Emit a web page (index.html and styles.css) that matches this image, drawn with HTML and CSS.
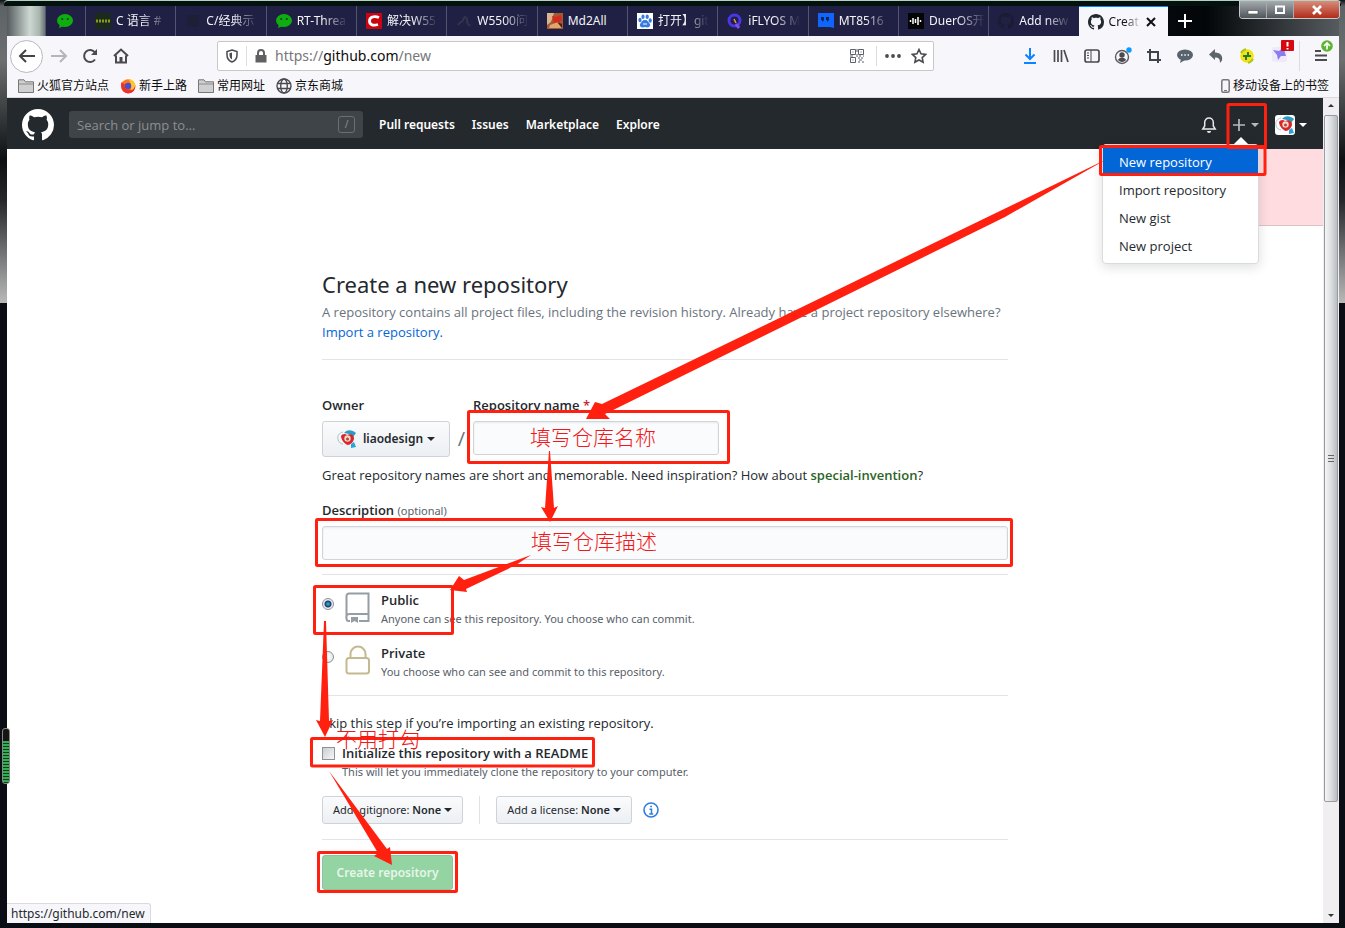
FILE: index.html
```html
<!DOCTYPE html>
<html lang="en">
<head>
<meta charset="utf-8">
<title>Create a New Repository</title>
<link rel="stylesheet" href="styles.css">
</head>
<body>
<svg class="defs" aria-hidden="true">
  <symbol id="octocat" viewBox="0 0 16 16"><path d="M8 0C3.58 0 0 3.58 0 8c0 3.54 2.29 6.53 5.47 7.59.4.07.55-.17.55-.38 0-.19-.01-.82-.01-1.49-2.01.37-2.53-.49-2.69-.94-.09-.23-.48-.94-.82-1.13-.28-.15-.68-.52-.01-.53.63-.01 1.08.58 1.23.82.72 1.21 1.87.87 2.33.66.07-.52.28-.87.51-1.07-1.78-.2-3.64-.89-3.64-3.95 0-.87.31-1.59.82-2.15-.08-.2-.36-1.02.08-2.12 0 0 .67-.21 2.2.82.64-.18 1.32-.27 2-.27.68 0 1.36.09 2 .27 1.53-1.04 2.2-.82 2.2-.82.44 1.1.16 1.92.08 2.12.51.56.82 1.27.82 2.15 0 3.07-1.87 3.75-3.65 3.95.29.25.54.73.54 1.48 0 1.07-.01 1.93-.01 2.2 0 .21.15.46.55.38A8.013 8.013 0 0016 8c0-4.42-3.58-8-8-8z"/></symbol>
  <symbol id="wechat" viewBox="0 0 16 16"><ellipse cx="8" cy="7.500" rx="8" ry="6.500" fill="#0fae10"/><path d="M3 11l-1 4 5-2z" fill="#0fae10"/><circle cx="5.200" cy="6" r="1.100" fill="#15402a"/><circle cx="10.800" cy="6" r="1.100" fill="#15402a"/></symbol>
  <symbol id="folder" viewBox="0 0 16 14"><path d="M.5 13.500V.8h5.500l1.500 2h8v10.700z" fill="#cfcfcf" stroke="#777"/><path d="M1 5h14" stroke="#8b8b8b"/></symbol>
  <symbol id="avatar" viewBox="0 0 20 20"><path d="M6 3C2 4 0 7 1 10c0 3 3 5 5 5" fill="none" stroke="#a9c3cc"/><path d="M7 4c4-4 8-3 12 0l-3 4-4-3z" fill="#2b9cc4"/><path d="M4 7c1-2 4-3 6-1 3-2 7 0 7 3 0 4-4 7-6 7-4-1-7-6-7-9z" fill="#d8262c"/><circle cx="10.500" cy="9.500" r="3.200" fill="#f4d9c6"/><circle cx="10.500" cy="10" r="1.500" fill="#b5453c"/><path d="M14 15l3-2 2 5-5 1z" fill="#27a5d8"/></symbol>
</svg>

<div class="window">
  <div class="tabbar">
    <div class="glass"></div>
    <div class="tabs">
      <div class="tab tab-pin"><svg width="16" height="16"><use href="#wechat"/></svg></div>
      <div class="tab"><svg width="16" height="16" viewBox="0 0 16 16"><path d="M0 0h16v16H0z" fill="#1a2b1c"/><path d="M1 8h14" stroke="#8a9a1c" stroke-width="3" stroke-dasharray="2 1"/></svg><span>C 语言 #</span></div>
      <div class="tab"><svg width="16" height="16" viewBox="0 0 16 16"><path d="M2 2h12v12H2z" fill="#1c1f36"/></svg><span>C/经典示</span></div>
      <div class="tab"><svg width="16" height="16"><use href="#wechat"/></svg><span>RT-Threa</span></div>
      <div class="tab"><svg width="16" height="16" viewBox="0 0 16 16"><path d="M0 0h16v16H0z" fill="#c9060f"/><path d="M13 4.500C8 2.500 3.500 4 3.500 8s4 5 8.500 3.500" fill="none" stroke="#fff" stroke-width="2.800"/></svg><span>解决W55</span></div>
      <div class="tab"><svg width="16" height="16" viewBox="0 0 16 16"><path d="M2 12c2-4 5-2 6-7 1-3 4 1 3 4 1 3 3 3 3 4" fill="none" stroke="#33354f" stroke-width="2"/></svg><span>W5500问</span></div>
      <div class="tab"><svg width="16" height="16" viewBox="0 0 16 16"><path d="M0 0h16v16H0z" fill="#a05a34"/><path d="M0 0h7l-3 9-4 3z" fill="#d9b48d"/><path d="M5 3l4 1 5-2 1 5-7 5z" fill="#d52a1d"/><path d="M3 12l8-3 4 6H2z" fill="#e2a56b"/><path d="M10 9l5 2v4z" fill="#4b2115"/></svg><span class="plain">Md2All</span></div>
      <div class="tab"><svg width="16" height="16" viewBox="0 0 16 16"><path d="M0 0h16v16H0z" fill="#fff"/><g fill="#3a7be0"><ellipse cx="3" cy="7" rx="1.600" ry="2.200"/><ellipse cx="6" cy="3.700" rx="1.600" ry="2.200"/><ellipse cx="10.200" cy="3.700" rx="1.600" ry="2.200"/><ellipse cx="13.200" cy="7.500" rx="1.600" ry="2.200"/><path d="M8 7c3 0 3 2 5 4 1 3-2 4-5 3-3 1-6 0-5-3 2-2 2-4 5-4z"/></g><path d="M6 11h4" stroke="#fff"/></svg><span>打开】git</span></div>
      <div class="tab"><svg width="16" height="16" viewBox="0 0 16 16"><circle cx="7.500" cy="7.500" r="5.500" fill="none" stroke="#4a35e8" stroke-width="3"/><path d="M7 6l2 4" stroke="#e49a58" stroke-width="1.500"/><path d="M9 11l3 4" stroke="#7a50f0" stroke-width="3"/></svg><span>iFLYOS M</span></div>
      <div class="tab"><svg width="16" height="16" viewBox="0 0 16 16"><path d="M0 0h16v15l-4-1H0z" fill="#0e66ff"/><path d="M3 4h3v3L4 9V7H3zm5 0h3v3L9 9V7H8z" fill="#12254c"/></svg><span>MT8516</span></div>
      <div class="tab"><svg width="16" height="16" viewBox="0 0 16 16"><path d="M0 0h16v16H0z" fill="#050505"/><path d="M2.500 7v2M5 5v6M7.500 6v4M10 4v8M12.500 7v2" stroke="#fff" stroke-width="1.500"/></svg><span>DuerOS开</span></div>
      <div class="tab"><svg width="16" height="16" fill="#1b1c34"><use href="#octocat"/></svg><span>Add new</span></div>
      <div class="tab tab-active"><svg width="16" height="16" fill="#24292e"><use href="#octocat"/></svg><span>Creat</span><button class="tab-close" aria-label="Close tab"><svg width="10" height="10" viewBox="0 0 10 10"><path d="M1 1l8 8M9 1L1 9" stroke="#111" stroke-width="2"/></svg></button></div>
    </div>
    <button class="new-tab" aria-label="New tab"><svg width="14" height="14" viewBox="0 0 14 14"><path d="M7 0v14M0 7h14" stroke="#fff" stroke-width="2"/></svg></button>
    <div class="caption">
      <button aria-label="Minimize"><svg width="12" height="10" viewBox="0 0 12 10"><path d="M1 5.500h10v3.500H1z" fill="#fff" stroke="#444" stroke-width=".6"/></svg></button>
      <button aria-label="Maximize"><svg width="12" height="10" viewBox="0 0 12 10"><path d="M2 1.500h8v6.500H2z" fill="none" stroke="#fff" stroke-width="2"/></svg></button>
      <button class="caption-close" aria-label="Close"><svg width="12" height="10" viewBox="0 0 12 10"><path d="M2 1l8 8M10 1L2 9" stroke="#fff" stroke-width="2.600"/></svg></button>
    </div>
  </div>

  <div class="navbar">
    <button class="back" aria-label="Back"><svg width="18" height="16" viewBox="0 0 18 16"><path d="M17 8H2M8 2L2 8l6 6" fill="none" stroke="#444" stroke-width="2"/></svg></button>
    <button class="icon" aria-label="Forward"><svg width="18" height="16" viewBox="0 0 18 16"><path d="M1 8h14M10 2l6 6-6 6" fill="none" stroke="#b5b5ba" stroke-width="2"/></svg></button>
    <button class="icon" aria-label="Reload"><svg width="16" height="16" viewBox="0 0 16 16"><path d="M13 11.500A6 6 0 1 1 13 4.500" fill="none" stroke="#4a4a4f" stroke-width="2"/><path d="M15 1v6H9z" fill="#4a4a4f"/></svg></button>
    <button class="icon" aria-label="Home"><svg width="16" height="16" viewBox="0 0 16 16"><path d="M1 8l7-6.500L15 8M3 7.500V14.500h10V7.500" fill="none" stroke="#4a4a4f" stroke-width="2"/><path d="M6.500 9h3v5h-3z" fill="#4a4a4f"/></svg></button>
    <div class="urlbar">
      <svg width="14" height="14" viewBox="0 0 14 14"><path d="M7 1l5 1.500V6c0 4-2.500 6-5 7-2.500-1-5-3-5-7V2.500z" fill="none" stroke="#4a4a4f" stroke-width="1.500"/><path d="M7 3.500v7C5 9 4.500 8 4.500 6V4.200z" fill="#4a4a4f"/></svg>
      <i class="sep"></i>
      <svg width="14" height="14" viewBox="0 0 14 14"><path d="M4 7V4a3 3 0 0 1 6 0v3" fill="none" stroke="#606064" stroke-width="2"/><path d="M1.500 6h11v7.500h-11z" fill="#606064"/></svg>
      <span class="url">https://<b>github.com</b>/new</span>
      <svg width="14" height="14" viewBox="0 0 14 14"><path d="M.5.500h5v5h-5zM8.500.500h5v5h-5zM.5 8.500h5v5h-5zM2.500 3h1M10.500 3h1M2.500 11h1M7 0v3M7 5v3M0 7h3M9 7h2M13 7h1M8 9h2M11 9h2M9 11h3M8 13h2M12 13h2" fill="none" stroke="#5b6169"/></svg>
      <i class="sep"></i>
      <svg width="18" height="14" viewBox="0 0 18 14" fill="#4a4a4f"><circle cx="3" cy="7" r="1.900"/><circle cx="9" cy="7" r="1.900"/><circle cx="15" cy="7" r="1.900"/></svg>
      <svg width="16" height="16" viewBox="0 0 16 16"><path d="M8 1.500l2 4.300 4.700.6-3.500 3.200.9 4.700L8 12l-4.100 2.300.9-4.700L1.300 6.400 6 5.800z" fill="none" stroke="#4a4a4f" stroke-width="1.600"/></svg>
    </div>
    <div class="tools">
      <button aria-label="Downloads"><svg width="16" height="16" viewBox="0 0 16 16"><path d="M8 0v11M3.500 6.500L8 11l4.500-4.500M2 15h12" fill="none" stroke="#0a84ff" stroke-width="2"/></svg></button>
      <button aria-label="Library"><svg width="16" height="16" viewBox="0 0 16 16"><path d="M1.500 2v12M5 2v12M8.500 2v12M11 2l4 12" stroke="#4a4a4f" stroke-width="1.700"/></svg></button>
      <button aria-label="Sidebars"><svg width="16" height="16" viewBox="0 0 16 16"><rect x="1" y="2" width="14" height="12" rx="2" fill="none" stroke="#4a4a4f" stroke-width="1.700"/><path d="M7 2v12M3 5h2M3 7.500h2M3 10h2" stroke="#4a4a4f"/></svg></button>
      <button aria-label="Account"><svg width="18" height="20" viewBox="0 0 18 20"><circle cx="8" cy="11" r="6.500" fill="none" stroke="#5c5c61" stroke-width="1.400"/><circle cx="8" cy="9" r="2.700" fill="#4a4a4f"/><path d="M4 14c1-3 7-3 8 0-2 2.500-6 2.500-8 0z" fill="#4a4a4f"/><circle cx="15" cy="4" r="2.700" fill="#0a9cff"/></svg></button>
      <button aria-label="Screenshot"><svg width="16" height="16" viewBox="0 0 16 16"><path d="M4 1v11h11M1 4h11v11" fill="none" stroke="#3f444b" stroke-width="2"/></svg></button>
      <button aria-label="Messages"><svg width="16" height="16" viewBox="0 0 16 16"><ellipse cx="8" cy="7" rx="8" ry="5.500" fill="#58636c"/><path d="M4 11l-1 4 5-3z" fill="#58636c"/><path d="M4 7h1.500M7.300 7h1.500M10.600 7H12" stroke="#fff" stroke-width="1.400"/></svg></button>
      <button aria-label="Undo"><svg width="16" height="16" viewBox="0 0 16 16"><path d="M1 6.500L7 1v3.500c6 0 8 4 7 8l-2 2.500c0-4-1-5.500-5-5.500V12z" fill="#5d646b"/></svg></button>
      <button aria-label="Extension"><svg width="16" height="16" viewBox="0 0 16 16"><circle cx="8" cy="8" r="6.800" fill="#f4e30e"/><path d="M2 5a6.800 6.800 0 0 1 5-3.700M14 11a6.800 6.800 0 0 1-5 3.700" stroke="#a6c71d" stroke-width="2" fill="none"/><path d="M9 4v4h3M4 8h3v4" stroke="#257b3a" stroke-width="2" fill="none"/><path d="M5 8h6" stroke="#257b3a" stroke-width="2"/></svg></button>
      <button class="bird" aria-label="Translate"><svg width="24" height="24" viewBox="0 0 24 24"><rect x="2" y="7" width="15" height="15" rx="2" fill="#eeeafb"/><path d="M3 10l6 1 5-4 1 6 1 3-5 0-3 4-1-5z" fill="#8b7df0"/><rect x="11" y="0" width="13" height="11" rx="1" fill="#d70910"/><path d="M17.500 2v4.500M17.500 8v1.500" stroke="#fff" stroke-width="2"/></svg></button>
    </div>
    <i class="sep tall"></i>
    <button class="menu" aria-label="Open menu"><svg width="20" height="24" viewBox="0 0 20 24"><path d="M2 11h6M2 15.500h12M2 20h12" stroke="#4a4a4f" stroke-width="2"/><circle cx="14" cy="6" r="5.800" fill="#5cb531"/><path d="M14 9.500V3.500M11 6l3-3 3 3" fill="none" stroke="#fff" stroke-width="1.700"/></svg></button>
  </div>

  <div class="bookmarks">
    <a href="#"><svg width="16" height="14"><use href="#folder"/></svg>火狐官方站点</a>
    <a href="#"><svg width="16" height="16" viewBox="0 0 16 16"><circle cx="8" cy="8.300" r="7" fill="#ff7a16"/><path d="M1.500 4C0 10 3 15 8 15.500c5 0 8-4 7.300-9-1 3-3 5-6 5-4 0-5-2-4.500-5z" fill="#f0302c"/><path d="M8 1c4 0 7 3 7.300 6-.8 3-2 5-5 5 2-2 1-8-2.300-11z" fill="#ffc72b"/><circle cx="8" cy="8" r="3.200" fill="#4a4fd0"/></svg>新手上路</a>
    <a href="#"><svg width="16" height="14"><use href="#folder"/></svg>常用网址</a>
    <a href="#"><svg width="16" height="16" viewBox="0 0 16 16"><g fill="none" stroke="#4a4a4f" stroke-width="1.400"><circle cx="8" cy="8" r="7"/><ellipse cx="8" cy="8" rx="3.300" ry="7"/><path d="M1.500 5.500h13M1.500 10.500h13"/></g></svg>京东商城</a>
    <a href="#" class="mobile"><svg width="9" height="14" viewBox="0 0 9 14"><rect x=".8" y=".8" width="7.400" height="12.400" rx="1.500" fill="none" stroke="#777" stroke-width="1.500"/><path d="M3 11.500h3" stroke="#777"/></svg>移动设备上的书签</a>
  </div>

  <div class="viewport">
    <div class="page">
      <header class="gh-header">
        <a href="#" class="logo" aria-label="GitHub"><svg width="32" height="32" fill="#fff"><use href="#octocat"/></svg></a>
        <label class="search"><input type="text" placeholder="Search or jump to…" aria-label="Search or jump to"><kbd>/</kbd></label>
        <nav>
          <a href="#">Pull requests</a><a href="#">Issues</a><a href="#">Marketplace</a><a href="#">Explore</a>
        </nav>
        <div class="gh-right">
          <button aria-label="Notifications"><svg width="16" height="18" viewBox="0 0 16 18"><path d="M8 2a4.300 4.300 0 0 0-4.300 4.300V10L1.800 13h12.400l-1.900-3V6.300A4.300 4.300 0 0 0 8 2z" fill="none" stroke="#e8e9ea" stroke-width="1.500"/><path d="M6 15h4a2 2 0 0 1-4 0z" fill="#e8e9ea"/></svg></button>
          <div class="create">
            <button aria-label="Create new" aria-expanded="true"><svg width="12" height="12" viewBox="0 0 12 12"><path d="M6 0v12M0 6h12" stroke="#b7babc" stroke-width="1.700"/></svg><i class="caret"></i></button>
            <div class="dropdown">
              <a href="#" class="selected">New repository</a><a href="#">Import repository</a><a href="#">New gist</a><a href="#">New project</a>
            </div>
          </div>
          <button class="me" aria-label="View profile"><svg class="face" width="20" height="20"><use href="#avatar"/></svg><i class="caret"></i></button>
        </div>
      </header>
      <div class="flash"></div>

      <main class="form">
        <h1>Create a new repository</h1>
        <p class="lead">A repository contains all project files, including the revision history. Already have a project repository elsewhere?<br><a href="#">Import a repository.</a></p>
        <hr>
        <div class="names">
          <div class="field"><span class="label">Owner</span><button class="btn owner"><svg width="20" height="20"><use href="#avatar"/></svg>liaodesign<i class="caret"></i></button></div>
          <span class="slash">/</span>
          <div class="field"><label class="label" for="repo">Repository name <em>*</em></label><input id="repo" class="text" type="text"></div>
        </div>
        <p class="hint">Great repository names are short and memorable. Need inspiration? How about <strong>special-invention</strong>?</p>
        <label class="label" for="desc">Description <small>(optional)</small></label>
        <input id="desc" class="text wide" type="text">
        <hr>
        <div class="choices">
          <label class="choice"><input type="radio" name="vis" checked>
            <svg width="26" height="32" viewBox="0 0 26 32"><path d="M5 29H4a2.500 2.500 0 0 1-2.500-2.500V4A2.500 2.500 0 0 1 4 1.500h19.500V29H14M1.500 26A3 3 0 0 1 4.500 22h19" fill="none" stroke="#959da5" stroke-width="2"/><path d="M6 25h7v6l-3.500-2L6 31z" fill="#959da5"/></svg>
            <span><b>Public</b><small>Anyone can see this repository. You choose who can commit.</small></span></label>
          <label class="choice"><input type="radio" name="vis">
            <svg width="26" height="32" viewBox="0 0 26 32"><path d="M5.500 13V9a7.500 7.500 0 0 1 15 0v4" fill="none" stroke="#c3ba8f" stroke-width="2"/><rect x="1.500" y="13" width="22.500" height="15.500" rx="2.500" fill="none" stroke="#c3ba8f" stroke-width="2"/></svg>
            <span><b>Private</b><small>You choose who can see and commit to this repository.</small></span></label>
        </div>
        <hr>
        <p class="skip">Skip this step if you’re importing an existing repository.</p>
        <label class="readme"><input type="checkbox"><span><b>Initialize this repository with a README</b><small>This will let you immediately clone the repository to your computer.</small></span></label>
        <div class="extras">
          <button class="btn small">Add .gitignore: <b>None</b><i class="caret"></i></button>
          <i class="divider"></i>
          <button class="btn small">Add a license: <b>None</b><i class="caret"></i></button>
          <svg class="info" width="16" height="16" viewBox="0 0 16 16"><circle cx="8" cy="8" r="7" fill="none" stroke="#2f7de1" stroke-width="1.600"/><path d="M6.500 7.300h2V12M6.200 12h4M7.200 4.600h1.800" fill="none" stroke="#2f7de1" stroke-width="1.500"/></svg>
        </div>
        <hr>
        <button class="submit">Create repository</button>
      </main>
      <div class="status">https://github.com/new</div>
    </div>
    <div class="scrollbar"><i class="up"></i><div class="thumb"><i></i></div><i class="down"></i></div>
  </div>
</div>

<div class="gauge"></div>

<svg class="marks" viewBox="0 0 1345 928">
  <g class="boxes">
    <rect x="1228" y="104.500" width="37.500" height="43" rx="1"/>
    <rect x="1100.500" y="146.500" width="164.500" height="28" rx="1"/>
    <rect x="468.500" y="411.500" width="260" height="51" rx="1"/>
    <rect x="316.500" y="519.500" width="695" height="46" rx="1"/>
    <rect x="314.500" y="586.500" width="138" height="47" rx="1"/>
    <rect x="311.500" y="738.500" width="282" height="27.500" rx="1"/>
    <rect x="318.500" y="852.500" width="138" height="39" rx="1"/>
  </g>
  <g class="arrows">
    <path d="M1107 159L602 404l-7-2-9 17 24 0-5-5 400-197z"/>
    <path d="M549 451h1l4 57 4-2-8 16-9-15 4 1z"/>
    <path d="M531 555L464 580l-5-4-9 14 17 2-1-3 50-24z"/>
    <path d="M324 621h2l3 100 4-1-8 17-9-17 4 1z"/>
    <path d="M329 771L387 849l3-2 2 18-18-9 4-3z"/>
  </g>
  <g class="notes">
    <text x="530" y="445">填写仓库名称</text>
    <text x="531" y="549">填写仓库描述</text>
    <text x="336" y="747">不用打勾</text>
  </g>
</svg>
</body>
</html>
```
FILE: styles.css
```css
* { box-sizing: border-box; }
body {
  position: relative;
  min-height: 100vh;
  margin: 0;
  padding: 5px 6px 5px 7px;
  display: flex;
  background: linear-gradient(#0b1114 0, #5d6264 6px, #6b6f70 60px, #0d1012 160px, #24282b 200px, #b9b9b9 303px, #0b0d14 303px);
  font: 13px/20px "Open Sans", "Noto Sans CJK SC", sans-serif;
  color: #24292e;
}
body::before { content: ""; position: absolute; top: 0; left: 4px; right: 4px; height: 5px; background: #04120f; border-top: 1px solid #b9cfc4; border-radius: 4px 4px 0 0; }
button, input { font: inherit; color: inherit; }
button { padding: 0; border: 0; background: none; display: flex; align-items: center; justify-content: center; }
a { color: #0366d6; text-decoration: none; }
i { display: block; font-style: normal; }
svg { flex: none; }
.defs { position: absolute; width: 0; height: 0; }
.window { flex: 1; display: flex; flex-direction: column; min-width: 0; }

.tabbar { height: 31px; display: flex; background: linear-gradient(90deg, #1f2043 60%, #020608 90%, #565b5f 100%); }
.glass { flex: none; width: 38px; background: linear-gradient(90deg, #555a5d, #cdd8d2 60%, #a9b5b0 85%, #6b7573); }
.tabs { flex: 0 1 1123px; min-width: 0; display: flex; }
.tab { flex: 1; min-width: 0; padding-left: 9px; display: flex; align-items: center; gap: 5px; background: #1f2043; border-left: 1px solid #53556f; color: #f4f4f8; font-family: "Noto Sans", "Noto Sans CJK SC", sans-serif; font-size: 12px; white-space: nowrap; }
.tab span { flex: 1; margin-right: 8px; -webkit-mask-image: linear-gradient(90deg, #000 50%, transparent); mask-image: linear-gradient(90deg, #000 50%, transparent); }
.tab .plain { -webkit-mask-image: none; mask-image: none; }
.tab-pin { flex: none; width: 40px; padding-left: 11px; }
.tab-active { background: #f7f7fb; border-top: 2px solid #0a84ff; border-left: 0; color: #111; }
.tab-active span { margin: 0; }
.tab-close { flex: none; width: 10px; margin-right: 12px; }
.new-tab { flex: none; width: 34px; }
.caption { align-self: flex-start; margin: -4px -1px 0 auto; z-index: 1; display: flex; border: 1px solid #c5c9cc; border-top: 0; border-radius: 0 0 4px 4px; overflow: hidden; }
.caption button { width: 27px; height: 17px; background: linear-gradient(#a5abaf, #50575c); border-right: 1px solid #aaa; }
.caption .caption-close { width: 45px; border: 0; background: linear-gradient(#d58e7c, #b22b18); }

.navbar { height: 40px; padding: 0 1px 0 3px; display: flex; align-items: center; background: #f7f7fb; }
.back { width: 33px; height: 33px; border: 1px solid #b9b9be; border-radius: 50%; background: #fff; }
.icon { width: 31px; height: 32px; }
.urlbar { flex: 0 1 717px; margin-left: 81px; height: 30px; padding: 0 6px 0 7px; display: flex; align-items: center; gap: 7px; background: #fff; border: 1px solid #c8c8cc; border-radius: 2px; }
.sep { width: 1px; height: 20px; background: #ddd; }
.url { flex: 1; font-family: "Noto Sans", sans-serif; font-size: 14px; color: #77777b; }
.url b { font-weight: 400; color: #0c0c0d; }
.urlbar .sep + svg + svg { margin-left: 2px; }
.url + svg { margin-right: 5px; }
.tools { margin-left: auto; display: flex; }
.tools button { width: 31px; height: 32px; }
.bird svg { margin: -8px 0 0 8px; }
.tall { height: 30px; margin-left: 6px; }
.menu { width: 30px; margin: -8px 0 0 8px; }

.bookmarks { height: 22px; padding: 0 10px 2px 11px; display: flex; align-items: center; gap: 11px; background: #f7f7fb; border-bottom: 1px solid #d9d9de; font-size: 12px; }
.bookmarks a { display: flex; align-items: center; gap: 3px; color: #0c0c0d; }
.bookmarks .mobile { margin-left: auto; }

.viewport { flex: 1; display: flex; background: #fff; }
.page { position: relative; flex: 1; min-width: 0; }
.gh-header { height: 51px; padding: 2px 16px 0 15px; display: flex; align-items: center; background: #24292e; color: #fff; }
.logo { display: flex; }
.search { flex: 0 1 294px; margin-left: 15px; height: 27px; padding: 0 8px; display: flex; align-items: center; background: #3f4448; border-radius: 3px; }
.search input { flex: 1; min-width: 0; padding: 0; border: 0; background: none; outline: 0; }
.search input::placeholder { color: #8b8f93; opacity: 1; }
.search kbd { width: 17px; height: 17px; border: 1px solid #6a6f74; border-radius: 3px; font: 10px/15px "Noto Sans", sans-serif; text-align: center; color: #8b8f93; }
.gh-header nav { margin-left: 16px; display: flex; gap: 17px; }
.gh-header nav a { color: #fff; font-family: "Noto Sans", sans-serif; font-size: 12px; font-weight: 600; }
.gh-right { margin-left: auto; display: flex; align-items: center; gap: 16px; }
.caret { width: 0; height: 0; border: 4px solid transparent; border-top-color: currentColor; border-bottom: 0; }
.create { position: relative; color: #b7babc; }
.create button { gap: 6px; height: 20px; }
.me { gap: 4px; }
.face { background: #fff; border-radius: 3px; }
.dropdown { position: absolute; z-index: 2; top: 29px; right: 0; width: 157px; padding: 3px 0; background: #fff; border: 1px solid #d9dbde; border-radius: 4px; box-shadow: 0 3px 12px rgba(27, 31, 35, .15); }
.dropdown::before { content: ""; position: absolute; top: -8px; right: 9px; border: 8px solid transparent; border-top: 0; border-bottom-color: #fff; }
.dropdown a { display: block; padding: 4px 16px; color: #24292e; }
.dropdown .selected { background: #0366d6; color: #fff; }
.flash { width: 180px; height: 77px; margin-left: auto; background: #ffdce0; border-bottom: 1px solid #dfc0c4; }

.form { max-width: 686px; margin: 0 auto; padding-top: 43px; }
h1 { margin: 0 0 3px; font-family: "Noto Sans", sans-serif; font-size: 22px; line-height: 30px; font-weight: 400; }
p { margin: 0; }
.lead { color: #6a737d; }
hr { margin: 0; border: 0; border-top: 1px solid #e1e4e8; }
.lead + hr { margin: 17px 0 35px; }
.label { font-weight: 600; line-height: 20px; }
.label em { font-style: normal; color: #cb2431; }
.label small, .choice small, .readme small { font-family: "Noto Sans", sans-serif; font-size: 11px; font-weight: 400; color: #586069; }
.names { display: flex; align-items: flex-end; }
.field { display: flex; flex-direction: column; gap: 6px; }
.btn { border: 1px solid #cfd2d6; border-radius: 3px; background: linear-gradient(#fafbfc, #eceff3); }
.btn .caret { margin-left: 4px; }
.owner { width: 128px; height: 36px; font-family: "Noto Sans", sans-serif; font-size: 12px; font-weight: 600; }
.owner svg { margin-right: 6px; }
.slash { width: 23px; text-align: center; font-size: 20px; line-height: 36px; color: #6a737d; }
.text { height: 34px; width: 246px; margin-bottom: 2px; padding: 0 8px; border: 1px solid #d1d5da; border-radius: 3px; background: #fafbfc; box-shadow: inset 0 1px 2px rgba(27, 31, 35, .075); outline: 0; }
.hint { padding: 8px 0 15px; }
.hint strong { font-weight: 600; color: #2b6326; }
.wide { display: block; width: 100%; margin: 5px 0 14px; }
.choices { padding: 15px 0 14px; display: grid; gap: 15px; }
.choice, .readme { display: flex; align-items: flex-start; }
.choice span, .readme span { display: flex; flex-direction: column; }
.choice b, .readme b { font-weight: 600; line-height: 20px; }
.choice small, .readme small { line-height: 18px; }
.choice svg { margin: 2px 10px 0 11px; }
.choice input { appearance: none; width: 12px; height: 12px; margin: 8px 0 0; border: 1px solid #8d9297; border-radius: 50%; background: radial-gradient(#fff, #dcdfe2); }
.choice input:checked { background: radial-gradient(circle, #49b5e6 0, #123f63 3px, #e8eef2 4px); }
.skip { padding: 17px 0 10px; }
.readme input { appearance: none; width: 13px; height: 13px; margin: 4px 7px 0 0; border: 1px solid #8d9297; background: linear-gradient(135deg, #c9ced3, #f6f6f6); }
.extras { margin: 15px 0; display: flex; align-items: center; }
.small { height: 28px; padding: 0 10px; font-family: "Noto Sans", sans-serif; font-size: 11px; white-space: pre; }
.small b { font-weight: 600; }
.small .caret { margin-left: 3px; }
.divider { width: 1px; height: 28px; margin: 0 16px; background: #dfe2e5; }
.info { margin-left: 11px; }
.submit { margin-top: 15px; width: 131px; height: 35px; border: 1px solid #8fc29b; border-radius: 3px; background: #94d3a2; color: #e6f6ea; font-family: "Noto Sans", sans-serif; font-size: 12px; font-weight: 600; }
.status { position: absolute; left: 0; bottom: 0; padding: 1px 5px 0 4px; background: #f7f7fb; border: 1px solid #d9d9de; border-width: 1px 1px 0 0; border-radius: 0 3px 0 0; font-family: "Noto Sans", sans-serif; font-size: 12px; line-height: 18px; }

.scrollbar { flex: none; width: 16px; padding: 6px 0; display: flex; flex-direction: column; align-items: center; background: #f0eef0; }
.up { border: 3px solid transparent; border-top: 0; border-bottom-color: #333; }
.down { margin-top: auto; border: 3px solid transparent; border-bottom: 0; border-top-color: #333; }
.thumb { flex: 0 1 687px; width: 14px; margin-top: 8px; display: grid; place-items: center; border: 1px solid #979a9e; border-radius: 2px; background: linear-gradient(90deg, #f5f5f6, #dcdee0 50%, #b9bec2); }
.thumb i { width: 6px; height: 8px; background: repeating-linear-gradient(#666 0 1px, transparent 1px 3px); }
.gauge { position: absolute; left: 2px; top: 728px; width: 8px; height: 56px; border: 1px solid #8a8a80; border-radius: 3px; background: linear-gradient(#151515 12px, transparent 12px), repeating-linear-gradient(#2fae53 0 2px, #0c3d1b 2px 3px); }

.marks { position: absolute; z-index: 5; left: 0; top: 0; width: 100%; height: 100%; pointer-events: none; }
.boxes { fill: none; stroke: #ff2010; stroke-width: 3; }
.arrows { fill: #ff2010; }
.notes { fill: #f01818; font: 300 21px "Noto Sans CJK SC", sans-serif; }
```
